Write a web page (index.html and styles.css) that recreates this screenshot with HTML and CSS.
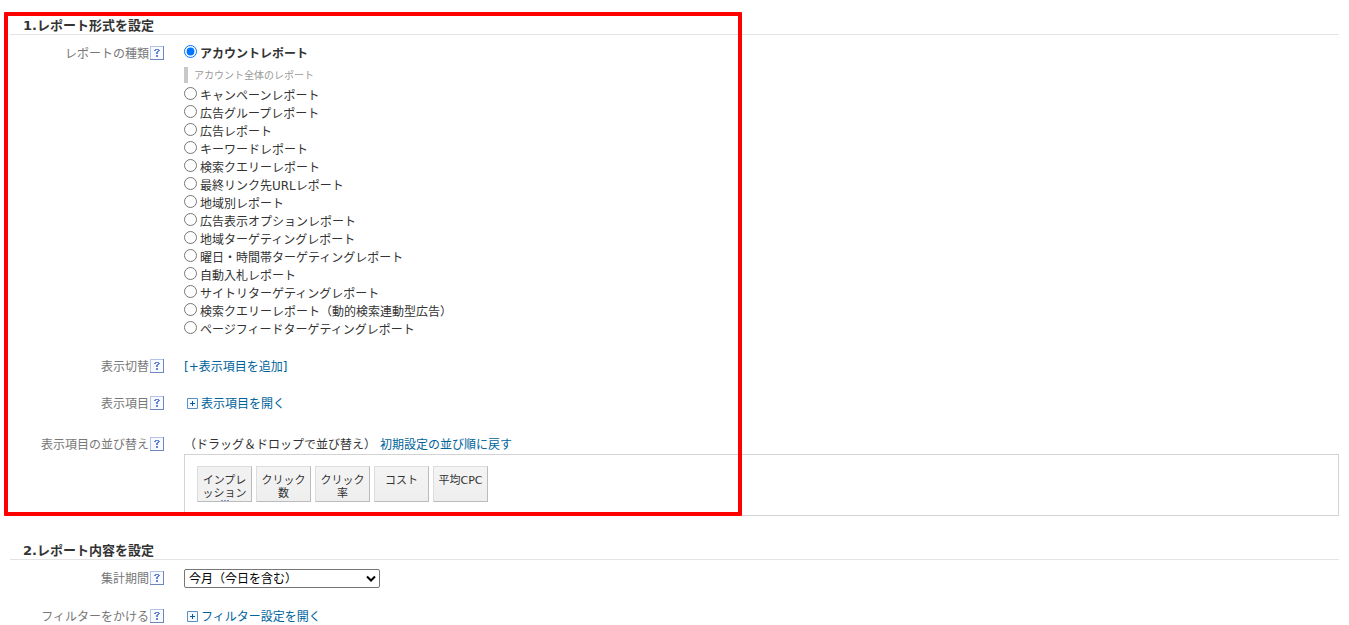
FILE: index.html
```html
<!DOCTYPE html>
<html lang="ja">
<head>
<meta charset="utf-8">
<title>レポート作成</title>
<link rel="stylesheet" href="styles.css">
</head>
<body>
<svg class="defs" aria-hidden="true">
  <symbol id="help" viewBox="0 0 14 14">
    <path d="M0 0h14v14H0z" fill="#b4c3e8"/>
    <path d="M13 0h1v14H0v-1h13z" fill="#6f86bd"/>
    <path d="M1 1h12v12H1z" fill="#f8faff"/>
    <path d="M4 4h2v1H4zM5 3h3v1H5zM8 3h1v3H8zM9 4h1v1H9zM7 5h2v1H7zM6 6h2v2H6zM6 9h2v2H6z" fill="#6583d3"/>
  </symbol>
  <symbol id="plus" viewBox="0 0 11 11">
    <path d="M.5.5h10v10H.5z" fill="#f3f9ff" stroke="#5b8fc4"/>
    <path d="M3 5.500h5M5.500 3v5" stroke="#07589a"/>
  </symbol>
</svg>
<main class="page">
  <section class="section">
    <h2 class="heading">1.レポート形式を設定</h2>
    <div class="row">
      <div class="label">レポートの種類<svg class="help"><use href="#help"/></svg></div>
      <div class="types" role="radiogroup" aria-label="レポートの種類">
        <label class="option selected"><input type="radio" name="type" checked>アカウントレポート</label>
        <p class="note">アカウント全体のレポート</p>
        <label class="option"><input type="radio" name="type">キャンペーンレポート</label>
        <label class="option"><input type="radio" name="type">広告グループレポート</label>
        <label class="option"><input type="radio" name="type">広告レポート</label>
        <label class="option"><input type="radio" name="type">キーワードレポート</label>
        <label class="option"><input type="radio" name="type">検索クエリーレポート</label>
        <label class="option"><input type="radio" name="type">最終リンク先URLレポート</label>
        <label class="option"><input type="radio" name="type">地域別レポート</label>
        <label class="option"><input type="radio" name="type">広告表示オプションレポート</label>
        <label class="option"><input type="radio" name="type">地域ターゲティングレポート</label>
        <label class="option"><input type="radio" name="type">曜日・時間帯ターゲティングレポート</label>
        <label class="option"><input type="radio" name="type">自動入札レポート</label>
        <label class="option"><input type="radio" name="type">サイトリターゲティングレポート</label>
        <label class="option"><input type="radio" name="type">検索クエリーレポート（動的検索連動型広告）</label>
        <label class="option"><input type="radio" name="type">ページフィードターゲティングレポート</label>
      </div>
    </div>
    <div class="row">
      <div class="label">表示切替<svg class="help"><use href="#help"/></svg></div>
      <div><a class="link" href="#">[+表示項目を追加]</a></div>
    </div>
    <div class="row">
      <div class="label">表示項目<svg class="help"><use href="#help"/></svg></div>
      <div><a class="link expand" href="#"><svg class="plus"><use href="#plus"/></svg>表示項目を開く</a></div>
    </div>
    <div class="row row-sort">
      <div class="label">表示項目の並び替え<svg class="help"><use href="#help"/></svg></div>
      <div>
        <div class="sort-head"><span>（ドラッグ＆ドロップで並び替え）</span><a class="link" href="#">初期設定の並び順に戻す</a></div>
        <ul class="chips">
          <li class="chip chip-more">インプレッション</li>
          <li class="chip">クリック数</li>
          <li class="chip">クリック率</li>
          <li class="chip">コスト</li>
          <li class="chip">平均CPC</li>
        </ul>
      </div>
    </div>
    <div class="highlight"></div>
  </section>
  <section class="section">
    <h2 class="heading">2.レポート内容を設定</h2>
    <div class="row">
      <label class="label" for="period">集計期間<svg class="help"><use href="#help"/></svg></label>
      <div class="field">
        <select class="select" id="period"><option>今月（今日を含む）</option></select>
        <svg class="arrow" viewBox="0 0 10 7"><path d="M1 1.500l4 4 4-4" fill="none" stroke="#000" stroke-width="2"/></svg>
      </div>
    </div>
    <div class="row">
      <div class="label">フィルターをかける<svg class="help"><use href="#help"/></svg></div>
      <div><a class="link expand" href="#"><svg class="plus"><use href="#plus"/></svg>フィルター設定を開く</a></div>
    </div>
  </section>
</main>
</body>
</html>
```
FILE: styles.css
```css
* { box-sizing: border-box; }
body {
  margin: 0;
  background: #fff;
  color: #333;
  font: 12px/18px "DejaVu Sans", "Noto Sans CJK JP", sans-serif;
}
.defs { position: absolute; width: 0; height: 0; }
.page {
  display: flex;
  flex-direction: column;
  gap: 27px;
  padding: 18px 10px 0;
}
.section { position: relative; }
.heading {
  margin: 0 0 10px;
  padding-left: 13px;
  border-bottom: 1px solid #e3e3e3;
  font-size: 13px;
  line-height: 16px;
}
.row {
  display: grid;
  grid-template-columns: 154px minmax(0, 1fr);
  column-gap: 20px;
  margin-bottom: 19px;
}
.row-sort { margin: 23px 0 0; }
.label {
  display: flex;
  justify-content: flex-end;
  align-items: center;
  gap: 1px;
  height: 18px;
  color: #777;
  white-space: nowrap;
}
.help { width: 14px; height: 14px; margin-bottom: 2px; flex: none; }
.types { display: flex; flex-direction: column; align-items: flex-start; }
.option { display: flex; gap: 3px; height: 18px; white-space: nowrap; }
.option input { width: 13px; height: 13px; margin: 0; }
.selected { font-weight: bold; }
.note {
  height: 16px;
  margin: 4px 0;
  padding-left: 6px;
  border-left: 4px solid #c8c8c8;
  color: #999;
  font-size: 10px;
  line-height: 18px;
}
.link { color: #00639c; text-decoration: none; }
.expand { display: flex; align-items: center; gap: 3px; padding-left: 3px; }
.plus { width: 11px; height: 11px; margin-bottom: 2px; }
.sort-head { display: flex; gap: 4px; }
.chips {
  display: flex;
  gap: 4px;
  min-height: 62px;
  margin: 0;
  padding: 11px 12px;
  border: 1px solid #d3d3d3;
  list-style: none;
}
.chip {
  width: 55px;
  height: 36px;
  padding: 7px 4px 0;
  border: 1px solid;
  border-color: #ddd #bbb #bbb #ddd;
  background: linear-gradient(#f4f4f4, #eee);
  font-size: 11px;
  line-height: 13px;
  text-align: center;
  word-break: break-all;
  line-break: anywhere;
}
.chip-more {
  background: repeating-linear-gradient(90deg, #8295d2 0 2px, #eee 2px 3px) center bottom / 8px 1px no-repeat, #f1f1f1;
}
.field { position: relative; width: 196px; margin: -1px 0 1px; }
.select {
  display: block;
  width: 100%;
  height: 19px;
  padding: 1px 4px 0;
  border: 1px solid #767676;
  border-radius: 2px;
  background: #fff;
  color: #000;
  font: inherit;
  line-height: 17px;
  appearance: none;
}
.arrow { position: absolute; top: 6px; right: 4px; width: 10px; height: 7px; pointer-events: none; }
.highlight {
  position: absolute;
  top: -6px;
  bottom: 0;
  left: -6px;
  width: 738px;
  border: 4px solid #f00;
  border-radius: 1px;
  pointer-events: none;
}
```
